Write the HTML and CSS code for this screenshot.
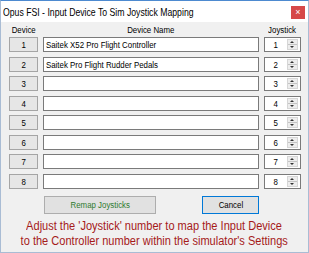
FILE: index.html
```html
<!DOCTYPE html>
<html lang="en">
<head>
    <meta charset="UTF-8">
    <title>Opus FSI - Input Device To Sim Joystick Mapping</title>
    <link rel="stylesheet" href="styles.css">
</head>
<body>

<div class="window">
    <div class="titlebar">
        <span class="txt left title">Opus FSI - Input Device To Sim Joystick Mapping</span>
        <span class="close">&times;</span>
    </div>

    <div class="mapping">
        <div class="head"><span class="txt">Device</span></div>
        <div class="head"><span class="txt">Device Name</span></div>
        <div class="head"><span class="txt">Joystick</span></div>
    </div>

    <div class="mapping rows" id="rows"></div>

    <div class="buttons">
        <button class="btn remap"><span class="txt">Remap Joysticks</span></button>
        <button class="btn cancel"><span class="txt">Cancel</span></button>
    </div>

    <div class="note">
        <span class="line">Adjust the 'Joystick' number to map the Input Device</span>
        <span class="line">to the Controller number within the simulator's Settings</span>
    </div>
</div>

<script>
    const names = ['Saitek X52 Pro Flight Controller', 'Saitek Pro Flight Rudder Pedals', '', '', '', '', '', ''];
    const rows = document.getElementById('rows');

    names.forEach((name, i) => {
        const num = i + 1;
        rows.innerHTML += `
            <div class="device"><span class="txt">${num}</span></div>
            <div class="name"><span class="txt left">${name}</span></div>
            <div class="spin">
                <span class="value"><span class="txt">${num}</span></span>
                <span class="arrows"><i class="up"></i><i class="down"></i></span>
            </div>`;
    });
</script>

</body>
</html>
```

FILE: styles.css
```css
body {
    margin: 0;
    background: #f0f0f0;
    font-family: 'Liberation Sans', Arial, sans-serif;
    color: #000;
}

/* the dialog text is narrower than Arial, squeeze it a bit */
.txt {
    display: inline-block;
    white-space: nowrap;
    transform: scaleX(0.82);
}

.txt.left {
    transform-origin: left center;
}

.window {
    width: 307px;
    height: 251px;
    border: 1px solid #a9bcd4;
    border-top-color: #4d8ad0;
    background: #f0f0f0;
    overflow: hidden;
}

.titlebar {
    height: 21px;
    background: #fff;
    display: flex;
    align-items: center;
    justify-content: space-between;
    padding: 0 3px 0 2px;
}

.title {
    font-size: 10.6px;
    margin-top: 1px;
}

.close {
    width: 14px;
    height: 13px;
    background: #d64848;
    color: #fff;
    font-size: 9px;
    line-height: 13px;
    text-align: center;
    margin-top: 2px;
}

.mapping {
    display: grid;
    grid-template-columns: 29px 216px 37px;
    column-gap: 5px;
    margin-left: 8px;
}

.head {
    font-size: 9.6px;
    text-align: center;
    height: 15px;
    line-height: 14px;
    padding-top: 1px;
    box-sizing: border-box;
}

.rows {
    row-gap: 4.5px;
}

.device, .name, .spin {
    height: 15px;
    box-sizing: border-box;
    font-size: 9.6px;
    line-height: 13px;
}

.device {
    background: #e6e6e6;
    border: 1px solid #a5a5a5;
    text-align: center;
}

.name {
    background: #fff;
    border: 1px solid #7a7a7a;
    padding-left: 2px;
}

.spin {
    background: #fff;
    border: 1px solid #7a7a7a;
    display: flex;
}

.value {
    flex: 1;
    text-align: center;
}

.arrows {
    width: 9px;
    margin: 1px 2px 1px 0;
    display: flex;
    flex-direction: column;
    background: #ededed;
    border: 1px solid #d6d6d6;
}

.arrows i {
    flex: 1;
    position: relative;
}

.arrows i::after {
    content: '';
    position: absolute;
    left: 2px;
    border-left: 2px solid transparent;
    border-right: 2px solid transparent;
}

.up::after {
    top: 1px;
    border-bottom: 2px solid #333;
}

.down {
    border-top: 1px solid #c4c4c4;
}

.down::after {
    top: 1px;
    border-top: 2px solid #333;
}

.buttons {
    display: flex;
    margin: 7px 0 0 43px;
}

.btn {
    height: 18px;
    font-family: inherit;
    font-size: 9.6px;
    background: #e1e1e1;
    border: 1px solid #adadad;
    padding: 0;
}

.remap {
    width: 112px;
    color: #2f7a2f;
}

.cancel {
    width: 57px;
    margin-left: 46px;
    border-color: #0078d7;
}

.note {
    margin-top: 5px;
    display: flex;
    flex-direction: column;
    align-items: center;
    color: #a51a1a;
    font-size: 12px;
    line-height: 15px;
}

.note .line {
    white-space: nowrap;
    transform: scaleX(0.92);
}
```
